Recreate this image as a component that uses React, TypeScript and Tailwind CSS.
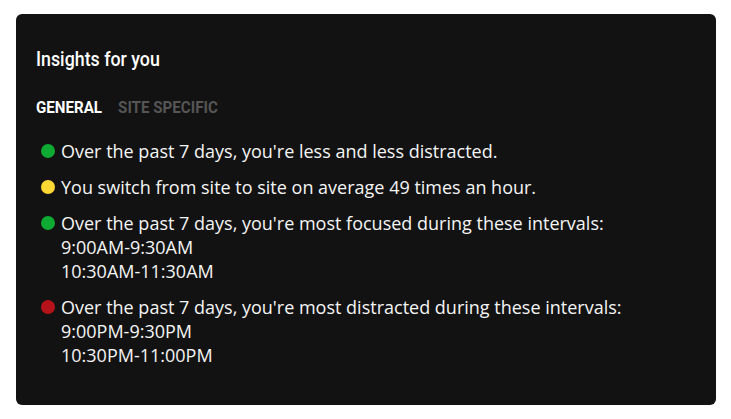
import React from "react";

const items = [
  { color: "bg-[#0eaa32]", lines: ["Over the past 7 days, you're less and less distracted."] },
  { color: "bg-[#fdd835]", lines: ["You switch from site to site on average 49 times an hour."] },
  {
    color: "bg-[#0eaa32]",
    lines: ["Over the past 7 days, you're most focused during these intervals:", "9:00AM-9:30AM", "10:30AM-11:30AM"],
  },
  {
    color: "bg-[#b5121b]",
    lines: ["Over the past 7 days, you're most distracted during these intervals:", "9:00PM-9:30PM", "10:30PM-11:00PM"],
  },
];

const display = { fontFamily: 'Roboto, "DejaVu Sans Condensed", sans-serif' };

export default function App() {
  return (
    <div className="w-[731px] h-[419px] bg-white pt-[14px] pl-4">
      <div className="w-[700px] h-[391px] bg-[#121212] rounded-md px-5 pt-[33px]">
        <h1 className="text-white text-[20px] leading-[24px] font-medium">
          <span className="inline-block origin-left scale-x-[0.89]" style={display}>
            Insights for you
          </span>
        </h1>
        <div className="mt-[26px] text-[17px] font-bold uppercase leading-[20px]" style={display}>
          <div className="flex gap-[18px] origin-left scale-x-[0.89]">
            <span className="text-white">General</span>
            <span className="text-[#555555]">Site specific</span>
          </div>
        </div>
        <ul className="mt-[22px] flex flex-col gap-[12px] pl-[5px]" style={{ fontFamily: '"Open Sans", sans-serif' }}>
          {items.map((it, i) => (
            <li key={i} className="flex items-start gap-[6px] text-[18px] leading-[24px] text-[#f5f5f5]">
              <span className={`mt-[5px] w-[14px] h-[14px] rounded-full shrink-0 ${it.color}`} />
              <div className="flex flex-col">
                {it.lines.map((l, j) => (
                  <span key={j}>{l}</span>
                ))}
              </div>
            </li>
          ))}
        </ul>
      </div>
    </div>
  );
}
